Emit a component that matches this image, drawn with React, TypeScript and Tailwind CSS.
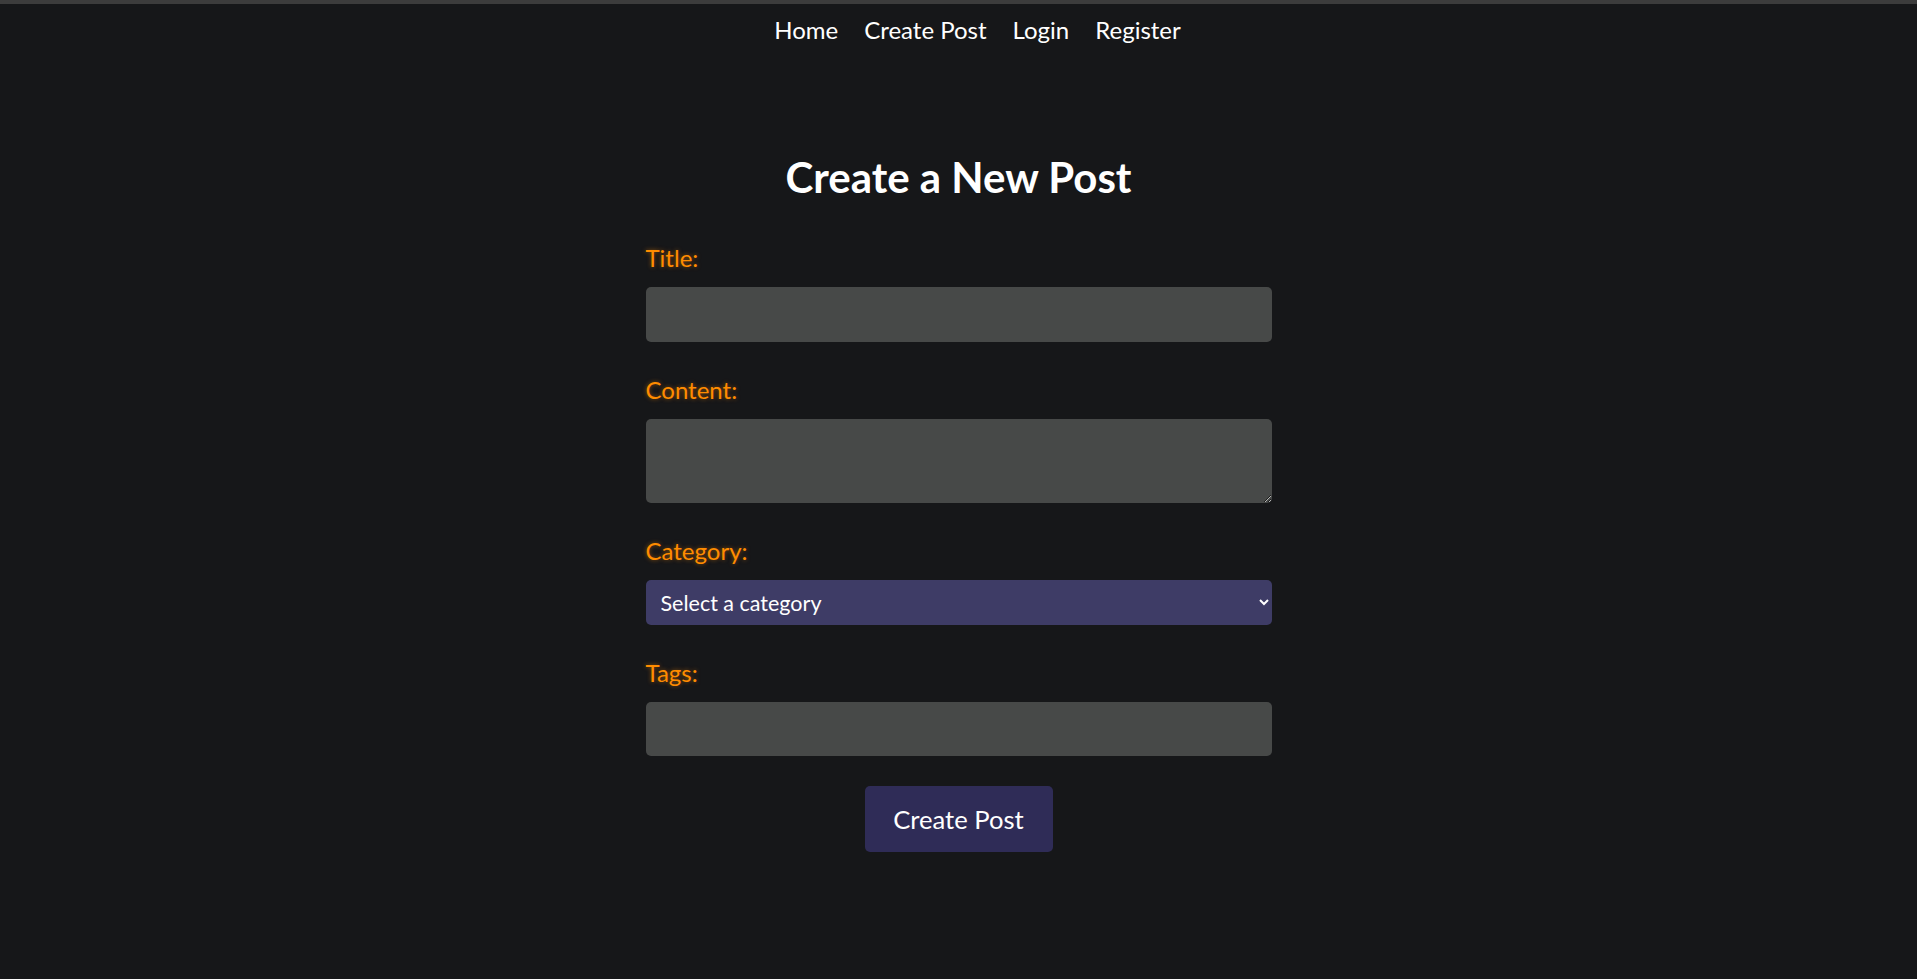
import React from 'react';

const labelCls =
  'block text-[24px] leading-[29px] text-[#ff8c00] mb-[15px] [text-shadow:0_0_4px_rgba(255,140,0,0.5)]';
const fieldCls = 'block w-full rounded-[5px] bg-[#474948] text-white outline-none';

export default function App() {
  return (
    <div className="min-h-screen bg-[#161719] text-white font-['Lato','Liberation_Sans',sans-serif]">
      {/* browser strip */}
      <div className="h-[4px] bg-[#3c3c3c]" />

      {/* Nav */}
      <nav className="flex justify-center gap-[26px] pt-[11px] pl-[38px] text-[24px] leading-[29px]">
        {['Home', 'Create Post', 'Login', 'Register'].map((item) => (
          <a key={item} href="#" className="text-white">
            {item}
          </a>
        ))}
      </nav>

      <main className="mx-auto w-[626px] pt-[108px]">
        <h1 className="text-center text-[42px] leading-[50px] font-bold mb-[41px]">Create a New Post</h1>

        <form className="flex flex-col">
          <div className="mb-[33px]">
            <label className={labelCls}>Title:</label>
            <input type="text" className={`${fieldCls} h-[55px]`} />
          </div>

          <div className="mb-[33px]">
            <label className={labelCls}>Content:</label>
            <textarea className={`${fieldCls} h-[84px]`} />
          </div>

          <div className="mb-[33px]">
            <label className={labelCls}>Category:</label>
            <select className="block w-full h-[45px] rounded-[5px] bg-[#3e3c66] text-white text-[21.5px] pl-[11px] pr-[6px] outline-none [color-scheme:dark]">
              <option>Select a category</option>
              <option>Technology</option>
              <option>Lifestyle</option>
            </select>
          </div>

          <div className="mb-[30px]">
            <label className={labelCls}>Tags:</label>
            <input type="text" className={`${fieldCls} h-[54px]`} />
          </div>

          <div className="flex justify-center">
            <button type="button" className="w-[188px] h-[66px] rounded-[5px] bg-[#2f2c57] text-white text-[25.6px]">
              Create Post
            </button>
          </div>
        </form>
      </main>
    </div>
  );
}
